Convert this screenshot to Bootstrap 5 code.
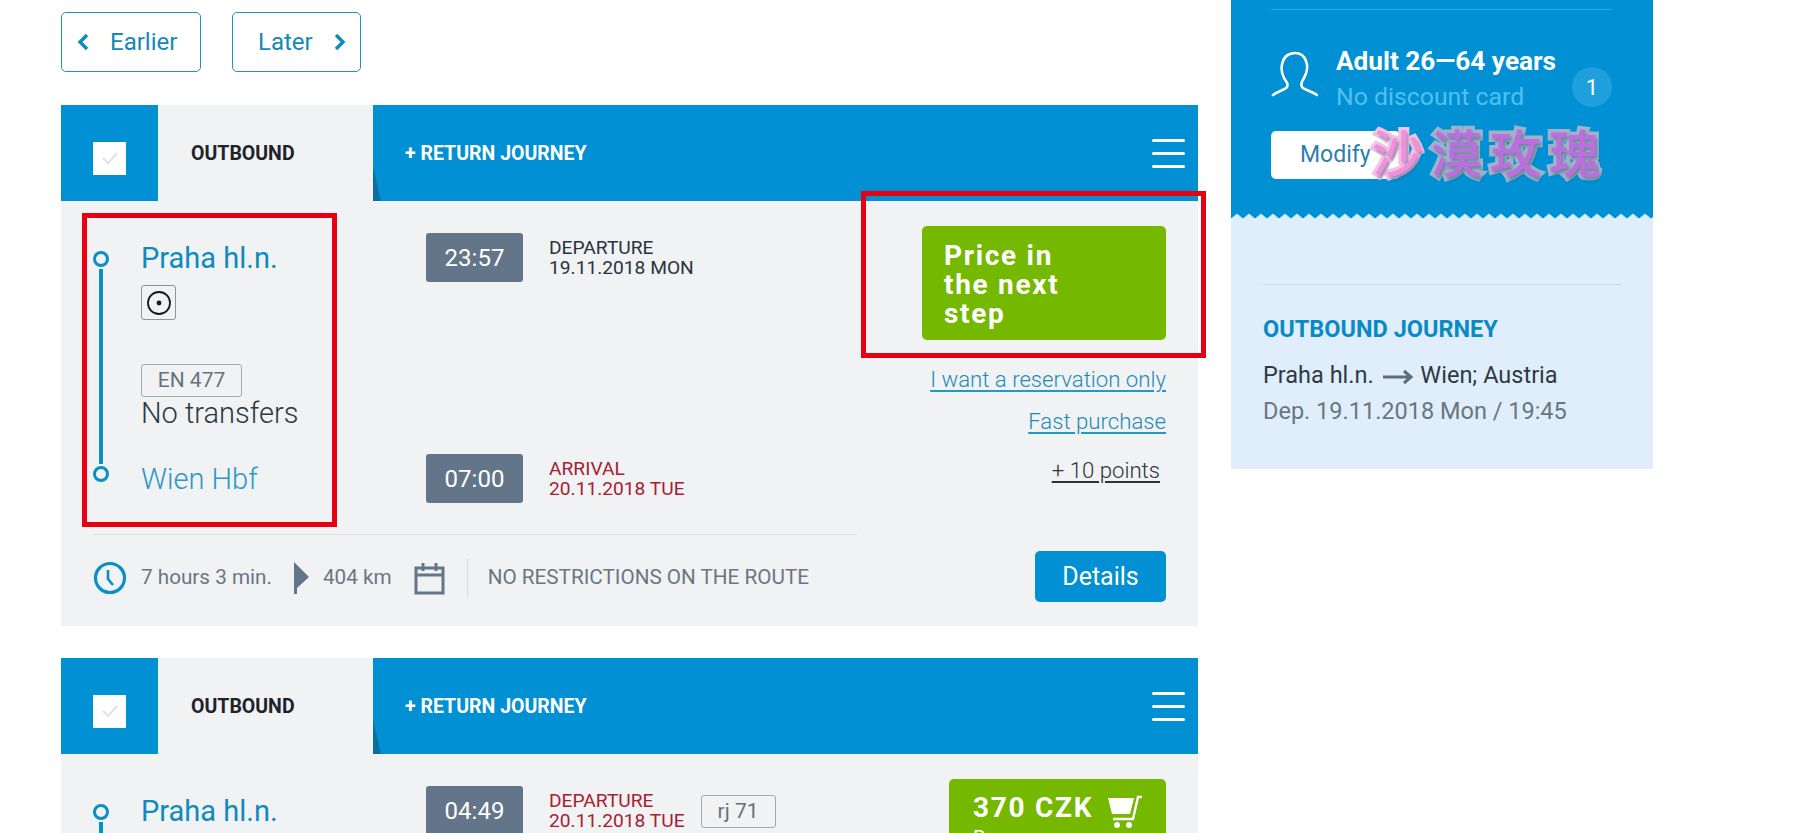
<!doctype html>
<html lang="en">
<head>
<meta charset="utf-8">
<title>Connections</title>
<link rel="stylesheet" href="https://cdn.jsdelivr.net/npm/bootstrap@5.3.0/dist/css/bootstrap.min.css">
<style>
html,body{height:833px;overflow:hidden;background:#fff}
body{font-family:Roboto,"Liberation Sans",sans-serif;color:#333d47}
.page-wrap{padding-left:61px;gap:33px;position:relative;height:833px}
.main-col{width:1137px;flex:none;padding-top:12px}
.side-col{width:422px;flex:none}
.pager{gap:31px;margin-bottom:33px}
.pager-btn{height:60px;border:1.5px solid #2a8fb5;border-radius:5px;color:#1488b8;font-size:24px;background:#fff;display:flex;align-items:center;text-decoration:none;font-weight:400;padding-bottom:1px}
.pager-btn.prev{width:140px;padding-left:15px;gap:21px}
.pager-btn.next{width:129px;padding-left:25px;gap:21px}
.trip{background:#f0f2f4;position:relative;margin-bottom:32px}
.trip-head{height:96px;background:#0090d3;position:relative}
.check-cell{width:97px;display:flex;align-items:center;justify-content:center;padding-top:10px}
.check-box{width:33px;height:33px;background:#fff;display:flex;align-items:center;justify-content:center}
.tab-out{width:215px;background:#f0f2f4;color:#1d2329;font-weight:700;font-size:19.5px;padding-left:33px;padding-top:2px;display:flex;align-items:center}
.tab-ret{flex:1;color:#fff;font-weight:700;font-size:19.5px;padding-left:32px;padding-right:13px;display:flex;align-items:center;justify-content:space-between;position:relative}
.tab-ret>span:first-child{padding-top:2px}
.tab-ret::before{content:"";position:absolute;left:0;bottom:0;width:8px;height:34px;background:#0a6f9e;clip-path:polygon(0 0,100% 100%,0 100%)}
.burger{width:33px;display:flex;flex-direction:column;gap:10px}
.burger i{display:block;height:3px;background:#fff;border-radius:2px}
.trip-body{padding:25px 32px 24px 32px}
.left-part{width:764px;flex:none}
.right-part{flex:1;display:flex;flex-direction:column;align-items:flex-end}
.top-part{height:309px;border-bottom:1px solid #dbe0e4}
.route{width:333px;flex:none;gap:32px;padding-bottom:38px;padding-top:15px}
.rail{width:16px;flex:none;display:flex;flex-direction:column;align-items:center;padding:10px 0 14px}
.rail b{display:block;width:16px;height:16px;border:3.5px solid #0a8fc4;border-radius:50%;flex:none}
.rail u{display:block;width:3.5px;flex:1;background:#0a8fc4;margin:2px 0}
.stop-name{font-size:29px;line-height:34px;color:#0d8bbd;font-weight:400;margin:0}
.stop-name.end{color:#2a98c6;font-weight:300;margin-top:auto}
.tile-icon{width:35px;height:35px;border:1.5px solid #8d959c;border-radius:3px;display:flex;align-items:center;justify-content:center;margin-top:10px}
.train-tag{display:inline-block;border:1.5px solid #a2a9af;border-radius:3px;color:#66727d;font-size:21px;line-height:31px;text-align:center}
.no-change{font-size:29px;line-height:32px;font-weight:300;color:#2e3841}
.times{flex:1;padding-top:7px;padding-bottom:31px}
.time-chip{width:97px;height:49px;background:#637689;color:#fff;border-radius:3px;font-size:24px;display:flex;align-items:center;justify-content:center;flex:none}
.time-label{margin-left:26px;font-size:19.2px;line-height:19.5px;color:#2a333c;text-transform:uppercase;padding-top:5px}
.time-label.red{color:#a8202f}
.foot-row{height:67px;padding-top:18px;font-size:20.7px;color:#6b7680}
.foot-row .rule{width:1px;height:38px;background:#d5dadd;margin:0 20px 0 22px}
.go-btn{width:244px;height:114px;background:#75b800;border-radius:5px;color:#fff;font-weight:700;font-size:28px;line-height:29px;letter-spacing:1.7px;padding:15px 22px 0}
.go-btn.buy{width:217px;padding:14px 24px 0}
.go-btn small{display:block;font-size:20px;line-height:18px;font-weight:400;letter-spacing:0}
.act-link{font-size:22.2px;font-weight:300;color:#1f8ab5;line-height:28px;text-decoration:underline;text-underline-offset:3px;text-decoration-color:#1f9ac7}
.pts{font-size:22.2px;font-weight:300;color:#2c343c;line-height:28px;text-decoration:underline;text-underline-offset:3px;margin-right:6px}
.details-btn{width:131px;height:51px;background:#0090d3;color:#fff;font-size:25px;border-radius:5px;margin-top:auto;border:0;padding:0}
.annot{position:absolute;border:5px solid #e60012;pointer-events:none}
.annot.a1{left:21px;top:108px;width:255px;height:314px}
.annot.a2{left:800px;top:86px;width:345px;height:167px}
.panel-top{background:#0090d3;height:213px;padding:9px 41px 0 40px;color:#fff}
.panel-line{height:1px;background:#27aee8;margin-bottom:35px}
.who-icon{margin-right:18px;flex:none;margin-top:6px}
.who-name{font-size:26.2px;font-weight:700;line-height:32px}
.who-card{font-size:24.8px;line-height:32px;color:#52c0ee;margin-top:4px}
.count{width:40px;height:40px;border-radius:50%;background:#1fa0dd;font-size:22px;display:flex;align-items:center;justify-content:center;margin-top:22px}
.modify{width:129px;height:48px;background:#fff;border-radius:5px;color:#2b80ad;font-size:23px;padding-left:29px;display:flex;align-items:center;margin-top:18px}
.zig{display:block;background:#0090d3}
.panel-low{background:#dfeefa;height:250px;padding:65px 32px 0 32px}
.panel-low .hr-line{height:1px;background:#cfdae3;margin-bottom:29px}
.jour-title{color:#0a8ac4;font-weight:700;font-size:23.5px;line-height:30px;margin-bottom:13px}
.jour-line{font-size:23.5px;line-height:36px;color:#2f3943}
.jour-line.muted-l{color:#6a7680}
.stamp{position:absolute;left:1372px;top:120px;font-family:"Noto Sans CJK SC","Noto Sans CJK TC",sans-serif;font-weight:500;font-size:51px;line-height:62px;letter-spacing:8px;color:#bb6fdc;-webkit-text-stroke:7px #9fb2ca;paint-order:stroke fill;text-shadow:2px 3px 3px rgba(60,80,110,.45);white-space:nowrap;pointer-events:none}
.stamp span{color:#f08fdc;-webkit-text-stroke:6px #f3c3e6}
</style>
</head>
<body>
<div class="page-wrap d-flex">
  <div class="main-col">
    <div class="pager d-flex">
      <a class="pager-btn prev" href="#"><svg width="12" height="18" viewBox="0 0 12 18"><path d="M10 2 3 9l7 7" fill="none" stroke="#0d8bbd" stroke-width="3.4"/></svg>Earlier</a>
      <a class="pager-btn next" href="#">Later<svg width="12" height="18" viewBox="0 0 12 18"><path d="m2 2 7 7-7 7" fill="none" stroke="#0d8bbd" stroke-width="3.4"/></svg></a>
    </div>

    <div class="trip">
      <div class="trip-head d-flex">
        <div class="check-cell"><span class="check-box"><svg width="20" height="16" viewBox="0 0 20 16"><path d="m3 8 5 5 9-10" fill="none" stroke="#dfe2e5" stroke-width="2"/></svg></span></div>
        <div class="tab-out">OUTBOUND</div>
        <div class="tab-ret"><span>+ RETURN JOURNEY</span><span class="burger"><i></i><i></i><i></i></span></div>
      </div>
      <div class="trip-body d-flex">
        <div class="left-part">
          <div class="top-part d-flex">
            <div class="route d-flex">
              <div class="rail"><b></b><u></u><b></b></div>
              <div class="d-flex flex-column flex-grow-1">
                <p class="stop-name">Praha hl.n.</p>
                <div class="tile-icon"><svg width="26" height="26" viewBox="0 0 26 26"><circle cx="13" cy="13" r="11" fill="none" stroke="#14181c" stroke-width="1.8"/><circle cx="13" cy="13" r="2.4" fill="#14181c"/></svg></div>
                <div style="margin-top:44px"><span class="train-tag" style="width:101px">EN 477</span></div>
                <div class="no-change">No transfers</div>
                <p class="stop-name end">Wien Hbf</p>
              </div>
            </div>
            <div class="times d-flex flex-column justify-content-between">
              <div class="d-flex"><span class="time-chip">23:57</span><span class="time-label">Departure<br>19.11.2018 Mon</span></div>
              <div class="d-flex"><span class="time-chip">07:00</span><span class="time-label red">Arrival<br>20.11.2018 Tue</span></div>
            </div>
          </div>
          <div class="foot-row d-flex align-items-center">
            <svg width="34" height="34" viewBox="0 0 34 34" class="flex-none"><circle cx="17" cy="17" r="14.5" fill="none" stroke="#0a8fc4" stroke-width="3.2"/><path d="M15 9v9l5 6" fill="none" stroke="#0a8fc4" stroke-width="2.6"/></svg>
            <span style="margin-left:14px">7 hours 3 min.</span>
            <svg width="18" height="34" viewBox="0 0 18 34" style="margin:0 12px 0 21px"><path d="M1 1l15 15L4 27v6H1z" fill="#637689"/></svg>
            <span>404 km</span>
            <svg width="31" height="34" viewBox="0 0 31 34" style="margin-left:22px"><path d="M2 7h27v25H2zM2 14h27M9 2v8M22 2v8" fill="none" stroke="#637689" stroke-width="3"/></svg>
            <span class="rule"></span>
            <span>NO RESTRICTIONS ON THE ROUTE</span>
          </div>
        </div>
        <div class="right-part">
          <div class="go-btn">Price in<br>the next<br>step</div>
          <a class="act-link" href="#" style="margin-top:25px">I want a reservation only</a>
          <a class="act-link" href="#" style="margin-top:14px">Fast purchase</a>
          <span class="pts" style="margin-top:21px">+ 10 points</span>
          <button class="details-btn" type="button">Details</button>
        </div>
      </div>
      <div class="annot a1"></div>
      <div class="annot a2"></div>
    </div>

    <div class="trip">
      <div class="trip-head d-flex">
        <div class="check-cell"><span class="check-box"><svg width="20" height="16" viewBox="0 0 20 16"><path d="m3 8 5 5 9-10" fill="none" stroke="#dfe2e5" stroke-width="2"/></svg></span></div>
        <div class="tab-out">OUTBOUND</div>
        <div class="tab-ret"><span>+ RETURN JOURNEY</span><span class="burger"><i></i><i></i><i></i></span></div>
      </div>
      <div class="trip-body d-flex">
        <div class="left-part">
          <div class="top-part d-flex">
            <div class="route d-flex">
              <div class="rail"><b></b><u></u><b></b></div>
              <div class="d-flex flex-column flex-grow-1"><p class="stop-name">Praha hl.n.</p></div>
            </div>
            <div class="times">
              <div class="d-flex"><span class="time-chip">04:49</span><span class="time-label red">Departure<br>20.11.2018 Tue</span><span class="train-tag align-self-start" style="width:75px;margin:9px 0 0 16px">rj 71</span></div>
            </div>
          </div>
        </div>
        <div class="right-part">
          <div class="go-btn buy">
            <div class="d-flex align-items-start justify-content-between">370 CZK<svg width="36" height="34" viewBox="0 0 36 34" style="margin:2px -1px 0 0"><path d="M1 3h26l-4 16H5z" fill="#fff"/><path d="M35 2h-4l-5 22H6" fill="none" stroke="#fff" stroke-width="2.4"/><circle cx="10" cy="30" r="3" fill="#fff"/><circle cx="22" cy="30" r="3" fill="#fff"/></svg></div>
            <small>Buy</small>
          </div>
        </div>
      </div>
    </div>
  </div>

  <div class="side-col">
    <div class="panel-top">
      <div class="panel-line"></div>
      <div class="d-flex">
        <svg width="47" height="46" viewBox="0 0 47 46" class="who-icon"><path d="M2 44c5-4 12-5 14-8 2-4-1-5-3-9-3-6-3-12-1-17 2-6 8-8 12-8s9 2 11 8c2 5 1 12-2 17-2 4-4 5-2 9 2 3 10 4 15 8" fill="none" stroke="#fff" stroke-width="2.6" stroke-linecap="round"/></svg>
        <div class="flex-grow-1">
          <div class="who-name">Adult 26—64 years</div>
          <div class="who-card">No discount card</div>
        </div>
        <div class="count">1</div>
      </div>
      <div class="modify">Modify</div>
    </div>
    <svg class="zig" width="422" height="6" viewBox="0 0 422 6"><defs><pattern id="zigp" width="12" height="6" patternUnits="userSpaceOnUse"><path d="M0 6 6 1l6 5z" fill="#dfeefa" stroke="#c4ecfb" stroke-width="1"/></pattern></defs><rect width="422" height="6" fill="url(#zigp)"/></svg>
    <div class="panel-low">
      <div class="hr-line"></div>
      <div class="jour-title">OUTBOUND JOURNEY</div>
      <div class="jour-line">Praha hl.n. <svg width="32" height="16" viewBox="0 0 32 16" style="margin:0 1px 0 2px"><path d="M1 8h28M22 2l7 6-7 6" fill="none" stroke="#5f6b76" stroke-width="3"/></svg> Wien; Austria</div>
      <div class="jour-line muted-l">Dep. 19.11.2018 Mon / 19:45</div>
    </div>
  </div>
  <div class="stamp"><span>沙</span>漠玫瑰</div>
</div>
<script src="https://cdn.jsdelivr.net/npm/bootstrap@5.3.0/dist/js/bootstrap.bundle.min.js"></script>
</body>
</html>
